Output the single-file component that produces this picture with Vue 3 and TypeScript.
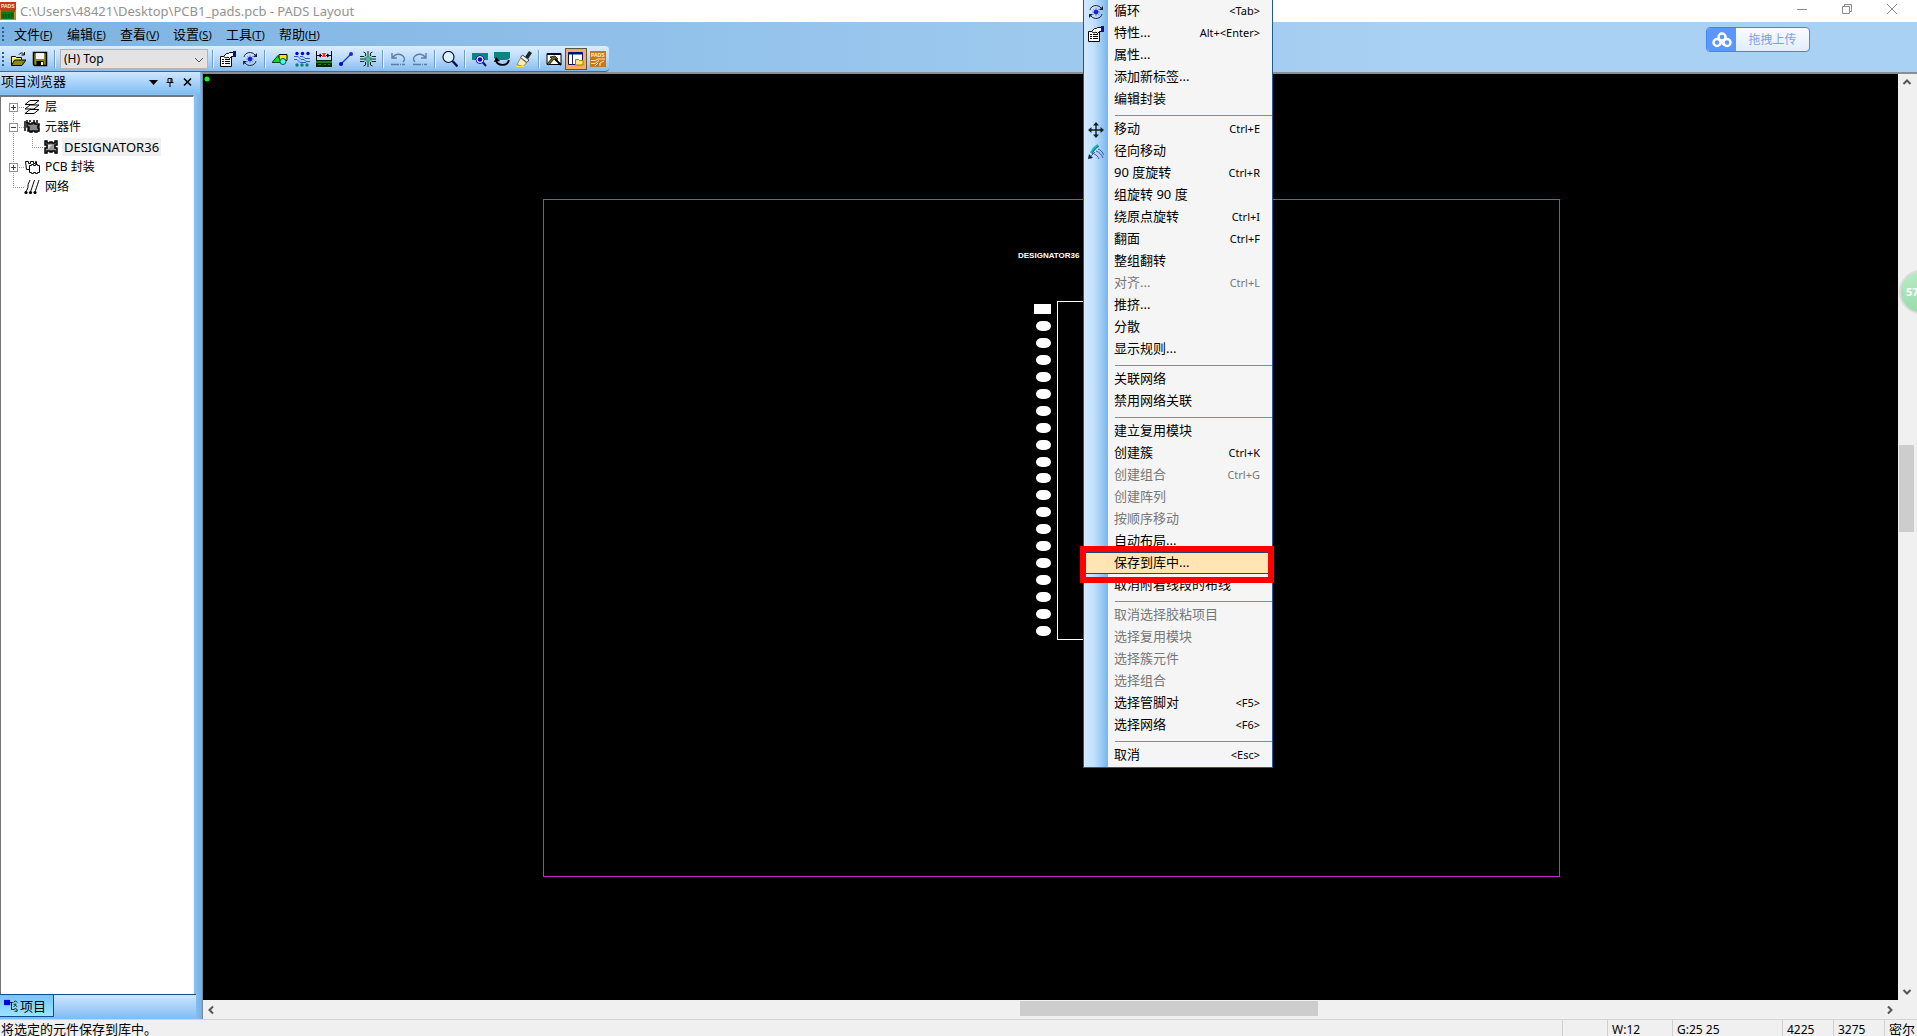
<script setup lang="ts">
import { ref } from 'vue'

type Tool = { icon: string; label: string; active?: boolean; disabled?: boolean }
type MenuEntry = { text: string; key?: string; off?: boolean; icon?: string; hot?: boolean }

const icons: Record<string, string> = {
  logo: '<rect width="16" height="18" fill="#c8381c"/><rect y="8" width="16" height="10" fill="#c98a1c"/><rect x="1" y="10" width="13" height="7" fill="#0c7a18"/><path d="M3 12v4M6 12v4M9 12v4M12 11v4" stroke="#041"/><path d="M1 9h14" stroke="#6b1008"/><text x="1" y="6" font-size="5" font-weight="700" font-family="Liberation Sans, sans-serif" fill="#fff3c8">PADS</text>',
  open: '<path d="M1.500 14V5.500h4l1 1h5V9" fill="#ffee70" stroke="#000"/><path d="M1.500 14.500l3-5.500H16l-4 5.500z" fill="#8c8a10" stroke="#000"/><path d="M9 3.500c1.500-2 4-2 5 0M14.500 1v3h-3" fill="none" stroke="#000"/>',
  save: '<path d="M1.500 1.500h13v13h-12l-1-1z" fill="#8c8a10" stroke="#000" stroke-width="1.500"/><path d="M4 2h8v6H4z" fill="#f4f4f4"/><path d="M4.500 10h7v4h-7z" fill="#000"/><path d="M9 11h2v3H9z" fill="#fff"/>',
  props: '<path d="M.5 5.500h11v10H.5z" fill="#fff" stroke="#000"/><path d="M2 8.500h2M5 8.500h5M2 10.500h2M5 10.500h5M2 12.500h2M5 12.500h5" stroke="#000"/><path d="M3.500 5.500l3-3h2l1-1h4v4h-2l-2 2-1.500-1.500-2 1z" fill="#fff" stroke="#000"/><path d="M13 0h3v6h-3z" fill="#10108c"/>',
  cycle: '<path d="M2 6c1-5 8-6 11-2M14 10c-1 5-8 6-11 2" fill="none" stroke="#223"/><path d="M15 2v4h-4zM1 14v-4h4z" fill="#223"/><circle cx="8" cy="8" r="2" fill="#0000e8"/><path d="M8 4.500v7M4.500 8h7M5.500 5.500l5 5M10.500 5.500l-5 5" stroke="#22d" stroke-width=".8"/>',
  shapes: '<path d="M7 3.500h8v6H7z" fill="#ffe010" stroke="#000"/><path d="M0 11.500l6-7 3 7z" fill="#10e010" stroke="#042"/><circle cx="11" cy="10.500" r="3" fill="#4ff" stroke="#055"/>',
  nets: '<g fill="#0000d8"><circle cx="3" cy="2.500" r="1.700"/><circle cx="8.500" cy="2.500" r="1.700"/><circle cx="14" cy="2.500" r="1.700"/></g><g fill="#127c7c"><circle cx="3" cy="14" r="1.700"/><circle cx="8" cy="14" r="1.700"/><circle cx="13" cy="14" r="1.700"/></g><path d="M0 5.500h4l3 3h3l2 2h4M0 8.500h3l3 3h6M6 5.500h3l2 2h5" stroke="#2a5dc8" fill="none"/>',
  drc: '<path d="M.5 0v9M15.500 0v9M1 4.500h14" stroke="#000" fill="none"/><path d="M2 4.500l3-2v4zM14 4.500l-3-2v4z"/><path d="M6 1h4v6H6z" fill="#fff"/><path d="M6.500 2l3 4M9.500 2l-3 4" stroke="#d22" stroke-width="1.500"/><path d="M0 9h16v7H0z" fill="#021"/><path d="M0 10h16v2H0zM2 13h3v1H2zM8 13h2v1H8zM12 13h2v1h-2z" fill="#1a801a"/>',
  line: '<path d="M3 13L13 3" stroke="#113cc8" stroke-width="1.300"/><circle cx="3" cy="13" r="2" fill="#00c"/><circle cx="13" cy="3" r="2" fill="#22e"/>',
  spread: '<path d="M5.500 5.500h5v5h-5z" fill="#3cc080"/><path d="M5.500 5V2l-2-1M8 6V0M10.500 5V2l2-1M5.500 11v3l-2 1M8 10v6M10.500 11v3l2 1M0 5.500h4l1 1M0 8h6M0 10.500h4l1-1M16 5.500h-4l-1 1M16 8h-6M16 10.500h-4l-1-1" stroke="#0a2a1a" fill="none"/><path d="M7 3v10M9 3v10" stroke="#5ab" stroke-width=".7"/>',
  undo: '<path d="M3 6c2-3 7-4 10-1 2 2 2 4 0 6M2 2v5h5" fill="none" stroke="#5d7da6" stroke-width="1.400"/><path d="M1 13.500h14" stroke="#5d7da6" stroke-width="1.500" stroke-dasharray="8 1 1 1"/>',
  redo: '<path d="M13 6C11 3 6 2 3 5c-2 2-2 4 0 6M14 2v5H9" fill="none" stroke="#5d7da6" stroke-width="1.400"/><path d="M1 13.500h14" stroke="#5d7da6" stroke-width="1.500" stroke-dasharray="8 1 1 1"/>',
  zoom: '<circle cx="6.500" cy="6" r="5.500" fill="#d8f2ff" stroke="#112" stroke-width="1.200"/><path d="M10.500 10l5 5.500" stroke="#10106c" stroke-width="2.400"/><path d="M4 4l2-1" stroke="#fff"/>',
  boardzoom: '<path d="M0 2h16v7h-4L9 6 5 9H0z" fill="#0c8484"/><circle cx="8" cy="8.500" r="4" fill="#fff" stroke="#119"/><circle cx="8" cy="8.500" r="2.300" fill="#00d"/><path d="M11 11.500l3 3.500" stroke="#116" stroke-width="2"/>',
  boardturn: '<path d="M0 1h16v6l-3 2H3L0 7z" fill="#0c8484"/><path d="M2 9c1 6 11 7 13 0" fill="none" stroke="#000" stroke-width="1.800"/><path d="M0 11l2-5 4 4z"/>',
  brush: '<path d="M9 6l4-6 3 2-4 6z" fill="#222"/><path d="M6.500 4l6.500 5-2 2.500-6.500-5z" fill="#eee" stroke="#222" stroke-width=".8"/><path d="M4.500 7l6 5-3.500 3.500-6-2z" fill="#f6eeb0" stroke="#77733a" stroke-width=".7"/><path d="M0 15.500h8" stroke="#f8e840"/>',
  hammer: '<path d="M1 2.500h14v11H1z" fill="#fff" stroke="#000"/><path d="M1 3h14" stroke="#003" stroke-width="2"/><path d="M4 6l5-1 3 3-2 1-2-1-5 6-2-1 5-6z" fill="#6a6a10" stroke="#000" stroke-width=".7"/><path d="M9 8l6 6" stroke="#000" stroke-width="2"/>',
  explorer: '<path d="M.5 1.500h14v12H.5z" fill="#fff" stroke="#00106c"/><path d="M0 2.500h15" stroke="#00108c" stroke-width="2"/><path d="M4.500 3v11" stroke="#225"/><path d="M7.500 14V8.500h3l1 1h3.500V14z" fill="#ffe878" stroke="#a07a10"/>',
  pads: '<path d="M0 0h16v16H0z" fill="#c7781f"/><path d="M1 9.500h4l3-1.500h7M1 12.500h4l4-3M10 15v-3l4-2M5 15l3-3" stroke="#ffe2b0" fill="none"/><text x="1" y="6" font-size="5" font-weight="700" font-family="Liberation Sans, sans-serif" fill="#fff0d0">PADS</text>',
  move: '<path d="M8 1v14M1 8h14" stroke="#122" stroke-width="1.400"/><path d="M8 0l3 3.500H5zM8 16l3-3.500H5zM0 8l3.500-3v6zM16 8l-3.500-3v6z" fill="#122"/>',
  radial: '<path d="M3 9c2-4 4-6 7-8" stroke="#12b8b8" stroke-width="2.400" fill="none"/><path d="M4 10c2-4 4-6 7-8" stroke="#034" stroke-width=".8" fill="none"/><path d="M0 15l1-5 4 4z" fill="#123"/><path d="M2 13l5-5M8 7c3 1 6 4 7 7M6 10c3 1 4 3 5 5M10 5c3 1 4 3 6 6" stroke="#239" stroke-width=".8" fill="none"/>',
  layers: '<g fill="#fff" stroke="#000"><path d="M1 14.500l5-4h9l-5 4z"/><path d="M1 10l5-4h9l-5 4z"/><path d="M1 5.500l5-4h9l-5 4z"/></g>',
  parts: '<path d="M1 2v10M3 1v3M6 1v2M10 1v3M13 1v3" stroke="#000" stroke-width="1.500"/><path d="M3 4h2v1h3V4h3v1h4v2h-1v2h1v3h-2v1h-2v-1H8v1H6v-1H4v-2h1V8H3z" fill="#888" stroke="#000" stroke-width="1.500"/>',
  part: '<path d="M2 2h2v2h3V3h2v1h3V2h2v4h-2v3h2v5h-2v-2H9v1H7v-1H4v2H2V9h2V6H2z" fill="#999" stroke="#000" stroke-width="1.500"/><path d="M5 6h4L5 10z" fill="#ddd"/>',
  decal: '<path d="M1.500 2.500h3v2h2v-2h3v2h2v-2h1v8h-3v-2h-3v2h-4z" fill="#fff" stroke="#000"/><path d="M5.500 6.500h2v-1h2v1h2v-1h2v1h2v7h-2v1h-2v-1h-2v1h-2v-1h-2z" fill="#fff" stroke="#000"/>',
  net: '<path d="M6 1c-1 3-2 3-2 6s-1 3-2 6M10.500 1c-1 3-1 3-2 6s-1 3-2 6M15 1c-1 3-1 3-2 6s-1 3-2 6" fill="none" stroke="#000"/><circle cx="2" cy="13.500" r="1.600"/><circle cx="6.500" cy="13.500" r="1.600"/><circle cx="11" cy="13.500" r="1.600"/>',
  tab: '<path d="M0 1h7v6H0z" fill="#0000e0"/><path d="M7 4h3M8.500 4v8h3M11 4l2-2 2 2M11 6h3M11 9l2-2 2 2M11 12l2-1 2 1v2h-3" fill="none" stroke="#000"/>'
}

const menus = [['文件', 'F'], ['编辑', 'E'], ['查看', 'V'], ['设置', 'S'], ['工具', 'T'], ['帮助', 'H']]
const layer = ref('(H) Top')

const toolGroups: Tool[][] = [
  [{ icon: 'props', label: '特性' }, { icon: 'cycle', label: '循环' }],
  [
    { icon: 'shapes', label: '绘图工具栏' }, { icon: 'nets', label: '设计工具栏' }, { icon: 'drc', label: '尺寸标注' },
    { icon: 'line', label: '布线' }, { icon: 'spread', label: 'ECO' }
  ],
  [{ icon: 'undo', label: '撤销', disabled: true }, { icon: 'redo', label: '重做', disabled: true }],
  [{ icon: 'zoom', label: '缩放' }],
  [{ icon: 'boardzoom', label: '板' }, { icon: 'boardturn', label: '前一视图' }, { icon: 'brush', label: '刷新' }],
  [{ icon: 'hammer', label: '输出窗口' }, { icon: 'explorer', label: '项目浏览器', active: true }, { icon: 'pads', label: 'PADS Router' }]
]

const tree = [
  { text: '层', icon: 'layers', box: '+' },
  { text: '元器件', icon: 'parts', box: '-' },
  { text: 'DESIGNATOR36', icon: 'part', child: true },
  { text: 'PCB 封装', icon: 'decal', box: '+' },
  { text: '网络', icon: 'net', last: true }
]

const context: MenuEntry[][] = [
  [
    { text: '循环', key: '<Tab>', icon: 'cycle' }, { text: '特性...', key: 'Alt+<Enter>', icon: 'props' },
    { text: '属性...' }, { text: '添加新标签...' }, { text: '编辑封装' }
  ],
  [
    { text: '移动', key: 'Ctrl+E', icon: 'move' }, { text: '径向移动', icon: 'radial' }, { text: '90 度旋转', key: 'Ctrl+R' },
    { text: '组旋转 90 度' }, { text: '绕原点旋转', key: 'Ctrl+I' }, { text: '翻面', key: 'Ctrl+F' }, { text: '整组翻转' },
    { text: '对齐...', key: 'Ctrl+L', off: true }, { text: '推挤...' }, { text: '分散' }, { text: '显示规则...' }
  ],
  [{ text: '关联网络' }, { text: '禁用网络关联' }],
  [
    { text: '建立复用模块' }, { text: '创建簇', key: 'Ctrl+K' }, { text: '创建组合', key: 'Ctrl+G', off: true },
    { text: '创建阵列', off: true }, { text: '按顺序移动', off: true }, { text: '自动布局...' },
    { text: '保存到库中...', hot: true }, { text: '取消附着线段的布线' }
  ],
  [
    { text: '取消选择胶粘项目', off: true }, { text: '选择复用模块', off: true }, { text: '选择簇元件', off: true },
    { text: '选择组合', off: true }, { text: '选择管脚对', key: '<F5>' }, { text: '选择网络', key: '<F6>' }
  ],
  [{ text: '取消', key: '<Esc>' }]
]

const pins = Array.from({ length: 19 }, (_, i) => 252 + Math.round(i * 16.94))
</script>

<template>
  <div class="app">
    <header class="title">
      <svg class="logo" viewBox="0 0 16 18" v-html="icons.logo" />
      <h1>C:\Users\48421\Desktop\PCB1_pads.pcb - PADS Layout</h1>
      <button aria-label="最小化"><svg viewBox="0 0 12 12"><path d="M1 6.500h10" /></svg></button>
      <button aria-label="还原"><svg viewBox="0 0 12 12"><path d="M1.500 3.500h7v7h-7zM3.500 3V1.500h7v7H9" /></svg></button>
      <button aria-label="关闭"><svg viewBox="0 0 12 12"><path d="M1 1l10 10M11 1L1 11" /></svg></button>
    </header>

    <div class="bars">
      <nav class="menubar">
        <i class="grip" />
        <button v-for="m in menus" :key="m[1]">{{ m[0] }}<small>(<u>{{ m[1] }}</u>)</small></button>
      </nav>
      <div class="toolbar">
        <i class="grip" />
        <button aria-label="打开"><svg viewBox="0 0 16 16" v-html="icons.open" /></button>
        <button aria-label="保存"><svg viewBox="0 0 16 16" v-html="icons.save" /></button>
        <i class="sep" />
        <div class="layer">
          <select v-model="layer" aria-label="层"><option>(H) Top</option></select>
          <svg viewBox="0 0 10 6"><path d="M1 1l4 4 4-4" /></svg>
        </div>
        <template v-for="(g, n) in toolGroups" :key="n">
          <i class="sep" />
          <button v-for="t in g" :key="t.icon" :class="{ active: t.active }" :disabled="t.disabled" :aria-label="t.label">
            <svg viewBox="0 0 16 16" v-html="icons[t.icon]" />
          </button>
        </template>
      </div>
      <button class="upload">
        <span class="cloud">
          <svg viewBox="0 0 20 16"><circle cx="10" cy="5" r="3.500" /><circle cx="5" cy="10.500" r="3.500" /><circle cx="15" cy="10.500" r="3.500" /><path d="M7.500 8l5 5" /></svg>
        </span>
        <span class="label">拖拽上传</span>
      </button>
    </div>

    <main>
      <aside>
        <div class="panel-head">
          <h2>项目浏览器</h2>
          <button aria-label="选项"><svg viewBox="0 0 10 10"><path d="M1 3h9L5.500 8z" /></svg></button>
          <button aria-label="固定"><svg viewBox="0 0 10 10"><path d="M3 1.500h4v4H3zM6 1.500v4M1.500 5.500h7M5 6v4" fill="none" stroke="#000" /></svg></button>
          <button aria-label="关闭面板"><svg viewBox="0 0 10 10"><path d="M2 1.500l7 7M9 1.500l-7 7" stroke="#000" stroke-width="1.600" /></svg></button>
        </div>
        <ul class="tree">
          <li v-for="t in tree" :key="t.text" :class="{ child: t.child, last: t.last }">
            <span class="branch"><i v-if="t.box" class="box"><b :class="{ plus: t.box === '+' }" /></i></span>
            <svg viewBox="0 0 16 16" v-html="icons[t.icon]" />
            <span class="name">{{ t.text }}</span>
          </li>
        </ul>
        <div class="tabs">
          <button><svg viewBox="0 0 16 16" v-html="icons.tab" />项目</button>
        </div>
      </aside>

      <section class="work">
        <div class="canvas">
          <svg class="board" width="1694" height="927">
            <circle cx="4" cy="5" r="2.500" fill="#0f2" />
            <rect x="340" y="125" width="1016" height="677" />
            <text x="815" y="184" class="refdes">DESIGNATOR36</text>
            <rect x="854" y="227" width="110" height="338" class="body" />
            <rect x="831" y="230" width="17" height="10" class="pad" />
            <rect v-for="y in pins" :key="y" x="833" :y="y - 5" width="15" height="10" rx="6" ry="5" class="pad" />
          </svg>
        </div>
        <div class="vscroll">
          <svg viewBox="0 0 10 8"><path d="M1.500 6L5 2.500 8.500 6" /></svg>
          <span class="track"><i /></span>
          <svg viewBox="0 0 10 8"><path d="M1.500 2L5 5.500 8.500 2" /></svg>
        </div>
        <div class="hscroll">
          <svg viewBox="0 0 8 10"><path d="M6 1.500L2.500 5 6 8.500" /></svg>
          <span class="track"><i /></span>
          <svg viewBox="0 0 8 10"><path d="M2 1.500L5.500 5 2 8.500" /></svg>
        </div>
      </section>
    </main>

    <footer>
      <span class="hint">将选定的元件保存到库中。</span>
      <span class="c1" /><span class="c2">W:12</span><span class="c3">G:25 25</span><span class="c4">4225</span><span class="c4">3275</span><span class="c5">密尔</span>
    </footer>

    <div class="context" role="menu">
      <div v-for="(g, n) in context" :key="n" class="group">
        <button v-for="e in g" :key="e.text" role="menuitem" :class="{ hot: e.hot }" :disabled="e.off">
          <span class="ico"><svg v-if="e.icon" viewBox="0 0 16 16" v-html="icons[e.icon]" /></span>
          <span class="txt">{{ e.text }}</span>
          <kbd v-if="e.key">{{ e.key }}</kbd>
        </button>
      </div>
    </div>
    <div class="mark" />
    <div class="ball">57</div>
  </div>
</template>

<style>
html, body { margin: 0; overflow: hidden; }
</style>

<style scoped>
* { box-sizing: border-box; }
.app {
  position: relative; display: flex; flex-direction: column; height: 100vh; overflow: hidden;
  background: #f0f0f0; color: #000; font: 13px/20px "Noto Sans", "Noto Sans CJK SC", sans-serif;
}
button { padding: 0; border: 0; background: none; color: inherit; font: inherit; }
h1, h2, ul { margin: 0; padding: 0; font-weight: 400; list-style: none; }
svg { display: block; flex: none; }

.title { display: flex; flex: none; align-items: center; height: 22px; padding-right: 3px; background: #fff; }
.logo { width: 16px; height: 18px; }
.title h1 { flex: 1; padding-left: 4px; color: #929292; font-size: 13px; line-height: 22px; }
.title button { display: flex; justify-content: center; width: 45px; height: 22px; padding-top: 3px; }
.title button svg { width: 12px; height: 12px; fill: none; stroke: #8a8a8a; }

.bars { position: relative; flex: none; height: 50px; background: linear-gradient(90deg, #7db3e2, #a9d1f3 75%); }
.menubar { display: flex; align-items: center; height: 24px; }
.menubar button { width: 53px; height: 24px; text-align: left; line-height: 22px; }
.menubar .grip { margin-right: 9px; }
small { font-size: 11px; }
.grip { flex: none; width: 3px; height: 14px; margin: 0 2px; background: repeating-linear-gradient(#2c5f9c 0 2px, transparent 2px 4px); background-size: 2px; background-repeat: repeat-y; }
.toolbar {
  display: flex; align-items: center; width: max-content; height: 26px; border-bottom: 1px solid #3c6a98; border-radius: 0 4px 4px 0;
  background: linear-gradient(#dcedff, #b9dafb 50%, #85bdef);
}
.toolbar button { display: flex; align-items: center; justify-content: center; width: 22px; height: 22px; }
.toolbar button svg { width: 16px; height: 16px; }
.toolbar .active { border: 1px solid #5c5348; background: #fbab60; }
.sep { width: 8px; height: 18px; background: linear-gradient(#6d9ccb, #6d9ccb) 3px 0 / 1px 100% no-repeat, linear-gradient(#e8f4ff, #e8f4ff) 4px 0 / 1px 100% no-repeat; }
.layer { position: relative; width: 150px; padding: 0 1px; }
.layer select { display: block; width: 100%; height: 20px; padding: 0 3px; border: 1px solid #b4b4b4; border-radius: 0; outline: 0; appearance: none; background: #e3e3e3; color: #000; font: 12px/18px "Noto Sans", sans-serif; }
.layer svg { position: absolute; top: 8px; right: 5px; width: 10px; height: 6px; fill: none; stroke: #555; }
.upload {
  position: absolute; top: 5px; right: 107px; display: flex; width: 104px; height: 25px; overflow: hidden;
  border: 1px solid #4486ee; border-radius: 4px; background: linear-gradient(#fafcff, #e2edfd);
}
.cloud { display: flex; align-items: center; justify-content: center; width: 29px; height: 100%; background: #5b96fb; }
.cloud svg { width: 20px; height: 16px; fill: none; stroke: #fff; stroke-width: 2.500; }
.label { flex: 1; color: #7c9fe8; font-size: 12px; line-height: 23px; }

main { display: flex; flex: 1; min-height: 0; }
aside { display: flex; flex: none; flex-direction: column; width: 203px; padding-right: 8px; border-right: 1px solid #7a8794; background: linear-gradient(90deg, #8dc3f3 96%, #70b0e8); }
.panel-head { display: flex; flex: none; align-items: flex-start; height: 22px; margin-right: -6px; padding-right: 5px; background: linear-gradient(#cfe6fe, #80bdf2); }
.panel-head h2 { flex: 1; padding-left: 1px; font-size: 13px; line-height: 18px; }
.panel-head button { width: 17px; padding: 5px 0 0 4px; }
.panel-head svg { width: 10px; height: 10px; }
.tree { flex: 1; margin-top: 1px; border: 1px solid #777; border-width: 2px 1px 0 1px; border-right-color: #e8f4ff; background: #fff; padding: 0 0 0 4px; }
.tree li { position: relative; display: flex; align-items: center; height: 20px; font-size: 12px; line-height: 18px; }
.tree li > svg { width: 16px; height: 16px; }
.branch { position: relative; width: 19px; height: 20px; background: repeating-linear-gradient(#999 0 1px, transparent 1px 2px) 8px 0 / 1px 100% no-repeat, repeating-linear-gradient(90deg, #999 0 1px, transparent 1px 2px) 8px 10px / 11px 1px no-repeat; }
.tree li:first-child .branch { background-position: 8px 10px; }
.last .branch { background-size: 1px 10px, 11px 1px; }
.child .branch { width: 38px; background: repeating-linear-gradient(#999 0 1px, transparent 1px 2px) 8px 0 / 1px 100% no-repeat, repeating-linear-gradient(#999 0 1px, transparent 1px 2px) 27px 0 / 1px 10px no-repeat, repeating-linear-gradient(90deg, #999 0 1px, transparent 1px 2px) 27px 10px / 11px 1px no-repeat; }
.box { position: absolute; top: 6px; left: 4px; width: 9px; height: 9px; border: 1px solid #929292; background: #fff; }
.box b { position: absolute; top: 3px; left: 1px; width: 5px; height: 1px; background: #24427a; }
.box .plus::after { content: ""; position: absolute; top: -2px; left: 2px; width: 1px; height: 5px; background: #24427a; }
.name { margin-left: 3px; padding: 0 2px; }
.child .name { background: #f0f0f0; font-size: 13px; }
.tabs { flex: none; height: 25px; margin-right: -2px; padding-bottom: 2px; border-top: 1px solid #0f4d8e; background: linear-gradient(#cfe6fe, #7dbbf2); }
.tabs button { display: flex; align-items: center; gap: 1px; width: 54px; height: 22px; padding-left: 3px; border: 1px solid #0f4d8e; border-width: 0 1px 1px 0; background: linear-gradient(#78c4f5, #9be4ff); font-size: 13px; }
.tabs svg { width: 16px; height: 14px; }

.work { display: grid; flex: 1; grid-template: minmax(0, 1fr) 19px / minmax(0, 1fr) 17px; min-width: 0; padding-right: 2px; border-top: 2px solid #8b8f94; background: #f0f0f0; }
.canvas { overflow: hidden; background: #000; }
.board { fill: none; stroke: #c030c0; shape-rendering: auto; }
.board > rect:not(.pad) { shape-rendering: crispEdges; }
.board circle { stroke: none; }
.board .body { stroke: #fff; }
.board .pad { fill: #fff; stroke: none; }
.refdes { fill: #fff; stroke: none; font: 700 8px "Liberation Sans", sans-serif; }
.vscroll, .hscroll { display: flex; align-items: center; }
.vscroll { flex-direction: column; padding: 4px 0; }
.vscroll svg { width: 10px; height: 8px; }
.hscroll svg { width: 8px; height: 10px; }
.vscroll svg, .hscroll svg { fill: none; stroke: #555; stroke-width: 2; }
.hscroll { padding: 0 4px; }
.track { display: flex; flex: 1; align-self: stretch; }
.track i { background: #cdcdcd; }
.vscroll .track { flex-direction: column; }
.vscroll .track::before { content: ""; flex: 0 0 39.800%; }
.vscroll .track i { flex: 0 0 9.600%; width: 15px; margin-left: 1px; }
.hscroll .track::before { content: ""; flex: 0 0 48.200%; }
.hscroll .track i { flex: 0 0 17.800%; margin: 1px 0 3px; }

footer { display: flex; flex: none; height: 17px; border-top: 1px solid #d4d4d4; font-size: 12px; line-height: 19px; white-space: nowrap; }
.hint { flex: 1; padding-left: 1px; font-size: 13px; }
footer span + span { flex: none; padding-left: 4px; border-left: 1px solid #d0d0d0; }
.c1 { width: 45px; }
.c2 { width: 65px; }
.c3 { width: 110px; }
.c4 { width: 51px; }
.c5 { width: 33px; font-size: 13px; }

.context { position: absolute; top: 0; left: 1083px; width: 190px; border: 1px solid #1b5c97; border-top: 0; background: linear-gradient(90deg, #d3e9ff, #c2e0fd 10px, #78b6ee 24px, #f5f5f5 24px); }
.context button { display: flex; align-items: flex-start; width: 100%; height: 22px; line-height: 20px; text-align: left; }
.group + .group::before { content: ""; display: block; height: 8px; background: linear-gradient(#6a92b8, #6a92b8) 31px 5px / 100% 1px no-repeat; }
.group:last-child { padding-bottom: 1px; }
.ico { width: 30px; padding: 4px 0 0 4px; }
.ico svg { width: 16px; height: 16px; }
.txt { flex: 1; }
kbd { padding-right: 12px; font: 11px/22px "Noto Sans", sans-serif; }
.context button:disabled { color: #777; }
.context .hot { border: 1px solid #24466e; background: #ffe4b4; line-height: 18px; }
.hot .ico { width: 29px; }
.mark { position: absolute; top: 546px; left: 1080px; width: 194px; height: 37px; border: 6px solid #f00; }
.ball { position: absolute; top: 270px; right: -26px; width: 44px; height: 44px; padding-left: 5px; border: 2px solid #dcdcdc; border-radius: 50%; background: linear-gradient(#b8ebc4, #98dcaa); color: #fff; font: 700 11px/40px "Noto Sans", sans-serif; }
</style>
